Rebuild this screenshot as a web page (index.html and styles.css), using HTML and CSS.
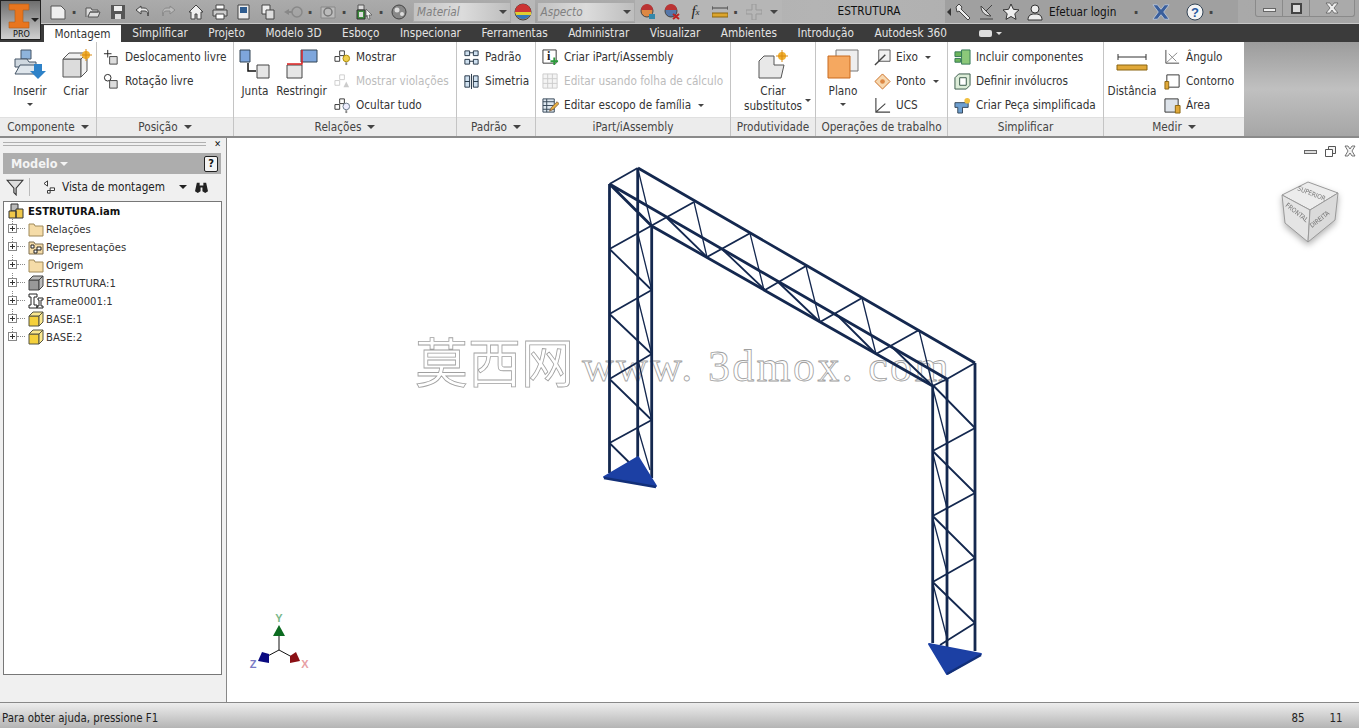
FILE: index.html
```html
<!DOCTYPE html>
<html>
<head>
    <meta charset="UTF-8">
    <title>ESTRUTURA</title>
    <link rel="stylesheet" href="styles.css">
</head>
<body>
    <div class="app-btn">
        <svg width="22" height="26" viewBox="0 0 22 26"><path d="M1 1h20v6h-6v12h6v6H1v-6h6V7H1z" fill="#e8751e" stroke="#b05a14" stroke-width=".6"/></svg>
        <span class="app-pro">PRO</span>
        <span class="app-caret"></span>
    </div>

    <div class="titlebar">
        <div class="quick">
            <span class="qa qa-w"><svg viewBox="0 0 16 16"><path d="M1 2h10l4 4v9H1z" fill="#eee" stroke="#555"/></svg></span><span class="qa-drop">▪</span>
            <span class="qa qa-w"><svg viewBox="0 0 16 16"><path d="M1 13V4h5l1 2h6v2H5l-2 5h10l2-5H5" fill="#ddd" stroke="#555"/></svg></span>
            <span class="qa qa-w"><svg viewBox="0 0 16 16"><path d="M1 1h14v14H1z" fill="#555"/><path d="M4 2h8v5H4z" fill="#eee"/><path d="M5 10h6v5H5z" fill="#ddd"/></svg></span>
            <span class="qa qa-w"><svg viewBox="0 0 16 16"><path d="M6 2L1 6l5 4V7h4c2 0 3 2 3 5 1-4 0-8-4-8H6z" fill="#e8e8e8" stroke="#444"/></svg></span>
            <span class="qa qa-w"><svg viewBox="0 0 16 16"><path d="M10 2l5 4-5 4V7H6c-2 0-3 2-3 5-1-4 0-8 4-8h3z" fill="#bbb" stroke="#888"/></svg></span>
            <span class="qa qa-sep"><svg viewBox="0 0 16 16"><path d="M8 1L1 8h2v7h4v-5h2v5h4V8h2z" fill="#eee" stroke="#444"/></svg></span>
            <span class="qa"><svg viewBox="0 0 16 16"><path d="M4 1h8v4H4z" fill="#fff" stroke="#444"/><path d="M1 6h14v6H1z" fill="#ccc" stroke="#444"/><path d="M4 10h8v5H4z" fill="#fff" stroke="#444"/></svg></span>
            <span class="qa"><svg viewBox="0 0 16 16"><path d="M2 1h11v14H2z" fill="#eee" stroke="#444"/><path d="M4 3h7v6H4z" fill="#2f5c8f"/></svg></span>
            <span class="qa"><svg viewBox="0 0 16 16"><path d="M2 1h8v9H2z" fill="#eee" stroke="#444"/><path d="M6 6h8v9H6z" fill="#ddd" stroke="#444"/></svg></span>
            <span class="qa qa-wide"><svg viewBox="0 0 20 16"><path d="M1 8l5-3v2h3v2H6v2z" fill="#888"/><circle cx="14" cy="8" r="5" fill="none" stroke="#888" stroke-width="1.500"/></svg></span><span class="qa-drop">▪</span>
            <span class="qa"><svg viewBox="0 0 16 16"><path d="M1 3h14v11H1z" fill="#bbb" stroke="#888"/><circle cx="8" cy="8" r="4" fill="none" stroke="#777" stroke-width="1.500"/></svg></span><span class="qa-drop">▪</span>
            <span class="qa qa-green"><svg viewBox="0 0 18 16"><path d="M3 1h6v5H3z" fill="#ddd" stroke="#555"/><path d="M2 6h8v9H2z" fill="#3c8c3c" stroke="#333"/><path d="M4 8h4v5H4z" fill="#ddd"/><path d="M11 5l6 6-3 0 1 4-2 0-1-4-1 2z" fill="#eee" stroke="#444" stroke-width=".6"/></svg></span><span class="qa-drop">▪</span>
            <span class="qa"><svg viewBox="0 0 16 16"><circle cx="8" cy="8" r="7" fill="#888" stroke="#444"/><circle cx="6" cy="6" r="2.500" fill="#ddd"/><circle cx="11" cy="10" r="2" fill="#ddd"/></svg></span>
            <div class="combo combo-mat"><span>Material</span><i class="combo-arrow"></i></div>
            <span class="wheel"><svg viewBox="0 0 18 18"><circle cx="9" cy="9" r="8" fill="#d84" stroke="#444"/><path d="M1 9a8 8 0 0 1 16 0z" fill="#c33"/><path d="M2 12a8 8 0 0 0 14 0z" fill="#37b"/><path d="M1 9h16v3H2z" fill="#dc3"/></svg></span>
            <div class="combo combo-asp"><span>Aspecto</span><i class="combo-arrow"></i></div>
            <span class="qa-bright">
                <span class="qa"><svg viewBox="0 0 16 16"><circle cx="7" cy="7" r="6" fill="#d84" stroke="#444"/><path d="M1 6a6 6 0 0 1 12 0z" fill="#b33"/><path d="M9 10h6v5H9z" fill="#38a"/></svg></span>
                <span class="qa"><svg viewBox="0 0 16 16"><circle cx="7" cy="7" r="6" fill="#57a" stroke="#444"/><path d="M1 6a6 6 0 0 1 12 0z" fill="#b33"/><path d="M9 10l6 5M15 10l-6 5" stroke="#b22" stroke-width="2"/></svg></span>
                <span class="qa qa-fx">f<sub>x</sub></span>
                <span class="qa"><svg viewBox="0 0 16 16"><path d="M0 4h16M0 2v4M16 2v4" stroke="#444" fill="none"/><path d="M0 9h16v4H0z" fill="#dca52c" stroke="#8a6510"/></svg></span><span class="qa-drop">▪</span>
                <span class="qa"><svg viewBox="0 0 16 16"><path d="M6 0h4v6h6v4h-6v6H6v-6H0V6h6z" fill="none" stroke="#999"/></svg></span>
                <span class="qa-more"><i></i></span>
            </span>
        </div>
        <div class="doc-title">ESTRUTURA</div>
        <div class="info">
            <span class="info-left"></span>
            <span class="qa"><svg viewBox="0 0 18 18"><path d="M2 4l3-3 3 3-1 2 9 9-2 2-9-9-2 1z" fill="#eee" stroke="#444"/></svg></span>
            <span class="qa"><svg viewBox="0 0 18 18"><path d="M3 3c0 6 4 10 10 10z" fill="#ddd" stroke="#444"/><path d="M8 8l6-6M2 16h13" stroke="#444"/></svg></span>
            <span class="qa"><svg viewBox="0 0 18 18"><path d="M9 1l2.400 5.300 5.600.6-4.200 3.800 1.200 5.700L9 13.500 4 16.400l1.200-5.700L1 6.900l5.600-.6z" fill="#eee" stroke="#333"/></svg></span>
            <span class="qa"><svg viewBox="0 0 18 18"><circle cx="9" cy="6" r="4" fill="#eee" stroke="#333"/><path d="M2 17c0-5 3-6 7-6s7 1 7 6z" fill="#eee" stroke="#333"/></svg></span>
            <span class="login">Efetuar login</span>
            <span class="qa-drop">▪</span>
            <span class="qa qa-x"><svg viewBox="0 0 20 18"><path d="M1 1h5l4 5 4-5h5l-6 8 6 8h-5l-4-5-4 5H1l6-8z" fill="#3a5f9c" stroke="#c8d4e4" stroke-width=".8"/></svg></span>
            <span class="qa qa-help"><svg viewBox="0 0 18 18"><circle cx="9" cy="9" r="8" fill="#f4f4f4" stroke="#345"/><text x="9" y="13.500" text-anchor="middle" class="help-q">?</text></svg></span>
            <span class="qa-drop">▪</span>
        </div>
        <div class="win">
            <span class="win-btn"><i class="win-min"></i></span>
            <span class="win-btn"><i class="win-max"></i></span>
            <span class="win-btn win-close"><svg viewBox="0 0 14 12"><path d="M1 1h4l2 3 2-3h4L9 6l4 5H9L7 8l-2 3H1l4-5z" fill="#eee" stroke="#555" stroke-width=".7"/></svg></span>
        </div>
    </div>

    <div class="tabs">
        <a class="tab tab-on">Montagem</a>
        <a class="tab">Simplificar</a>
        <a class="tab">Projeto</a>
        <a class="tab">Modelo 3D</a>
        <a class="tab">Esboço</a>
        <a class="tab">Inspecionar</a>
        <a class="tab">Ferramentas</a>
        <a class="tab">Administrar</a>
        <a class="tab">Visualizar</a>
        <a class="tab">Ambientes</a>
        <a class="tab">Introdução</a>
        <a class="tab">Autodesk 360</a>
        <span class="tab-extra"><i></i><b></b></span>
    </div>

    <div class="ribbon">
        <div class="panel p-comp">
            <div class="panel-body">
                <div class="big big-a"><svg viewBox="0 0 32 30"><path d="M7 1h10v9H7z" fill="#8eb4dc" stroke="#456"/><path d="M1 10h12l2 3h7v5H1z" fill="#cfd8e0" stroke="#456"/><path d="M1 25l5-9h20l-5 9z" fill="#dfe6ec" stroke="#456"/><path d="M20 15h8v7h4l-8 8-8-8h4z" fill="#2e82c8"/></svg><span>Inserir</span><i class="caret"></i></div>
                <div class="big big-b"><svg viewBox="0 0 32 30"><path d="M3 10h18v18H3z" fill="#dcdcdc" stroke="#555"/><path d="M3 10l6-6h18l-6 6zM21 10l6-6v18l-6 6z" fill="#f0f0f0" stroke="#555"/><circle cx="26" cy="6" r="4" fill="#f0b030"/><path d="M26 0v12M20 6h12" stroke="#d98a10"/></svg><span>Criar</span></div>
            </div>
            <div class="panel-title">Componente<i class="caret caret-t"></i></div>
        </div>
        <div class="panel p-pos">
            <div class="panel-body col">
                <div class="row"><svg viewBox="0 0 18 18"><path d="M1 5h8M5 1v8" stroke="#222"/><path d="M7 8h8v8H7z" fill="#ddd" stroke="#444"/></svg><span>Deslocamento livre</span></div>
                <div class="row"><svg viewBox="0 0 18 18"><circle cx="5" cy="5" r="3.500" fill="none" stroke="#222"/><path d="M7 8h8v8H7z" fill="#ddd" stroke="#444"/></svg><span>Rotação livre</span></div>
            </div>
            <div class="panel-title">Posição<i class="caret caret-t"></i></div>
        </div>
        <div class="panel p-rel">
            <div class="panel-body">
                <div class="big big-c"><svg viewBox="0 0 32 30"><path d="M1 1h10v12H1z" fill="#7ea6dc" stroke="#345"/><path d="M18 16h12v13H18z" fill="#e6e6e6" stroke="#444"/><path d="M9 14v8h8" fill="none" stroke="#111" stroke-width="1.500"/></svg><span>Junta</span></div>
                <div class="big big-d"><svg viewBox="0 0 32 30"><path d="M15 1h16v12H15z" fill="#7ea6dc" stroke="#345"/><path d="M1 16h15v13H1z" fill="#e6e6e6" stroke="#444"/><path d="M1 15h15V1" fill="none" stroke="#d22" stroke-width="1.500"/></svg><span>Restringir</span></div>
                <div class="col">
                    <div class="row"><svg viewBox="0 0 18 18"><path d="M1 8h5v5H1zM6 2h5v5H6z" fill="#fff" stroke="#333"/><circle cx="13" cy="10" r="3.500" fill="#f0d050" stroke="#a80"/><path d="M12 14h2v3h-2z" fill="#888"/></svg><span>Mostrar</span></div>
                    <div class="row row-off"><svg viewBox="0 0 18 18"><path d="M1 8h5v5H1zM6 2h5v5H6z" fill="#fff" stroke="#ccc"/><path d="M10 15l3-6 3 6z" fill="#ccc"/></svg><span>Mostrar violações</span></div>
                    <div class="row"><svg viewBox="0 0 18 18"><path d="M1 8h5v5H1zM6 2h5v5H6z" fill="#fff" stroke="#333"/><circle cx="13" cy="10" r="3.500" fill="#eef" stroke="#678"/><path d="M12 14h2v3h-2z" fill="#888"/></svg><span>Ocultar tudo</span></div>
                </div>
            </div>
            <div class="panel-title">Relações<i class="caret caret-t"></i></div>
        </div>
        <div class="panel p-pad">
            <div class="panel-body col">
                <div class="row"><svg viewBox="0 0 18 18"><path d="M2 2h5v5H2zM11 2h5v5h-5zM2 11h5v5H2zM11 11h5v5h-5z" fill="#cfe0ef" stroke="#234"/><path d="M7 4h4M7 13h4" stroke="#234"/></svg><span>Padrão</span></div>
                <div class="row"><svg viewBox="0 0 18 18"><path d="M2 3h5v12H2zM11 3h5v12h-5z" fill="#cfe0ef" stroke="#234"/><path d="M2 9h5M11 9h5" stroke="#234"/><path d="M9 1v16" stroke="#234"/></svg><span>Simetria</span></div>
            </div>
            <div class="panel-title">Padrão<i class="caret caret-t"></i></div>
        </div>
        <div class="panel p-ipart">
            <div class="panel-body col">
                <div class="row"><svg viewBox="0 0 18 18"><path d="M1 1h14v14H1z" fill="#fff" stroke="#333"/><text x="7" y="12" text-anchor="middle" class="icon-i">i</text><path d="M13 9v8M9 13h8" stroke="#2a9a3a" stroke-width="2"/></svg><span>Criar iPart/iAssembly</span></div>
                <div class="row row-off"><svg viewBox="0 0 18 18"><path d="M1 1h15v15H1zM1 6h15M1 11h15M6 1v15M11 1v15" fill="#f4f4f4" stroke="#ccc"/></svg><span>Editar usando folha de cálculo</span></div>
                <div class="row"><svg viewBox="0 0 18 18"><path d="M1 2h12v14H1z" fill="#dfe8f0" stroke="#345"/><path d="M1 5h12M1 9h12M1 13h12M5 2v14" stroke="#345"/><path d="M8 15l2-4 6-6 2 2-6 6z" fill="#e8b040" stroke="#864"/></svg><span>Editar escopo de família</span><i class="caret caret-r"></i></div>
            </div>
            <div class="panel-title">iPart/iAssembly</div>
        </div>
        <div class="panel p-prod">
            <div class="panel-body">
                <div class="big big-e"><svg viewBox="0 0 32 30"><path d="M2 12l5-5h10v9h10l-3 13H2z" fill="#e8e8e8" stroke="#555"/><circle cx="25" cy="7" r="4" fill="#f0b030"/><path d="M25 1v12M19 7h12" stroke="#d98a10"/></svg><span>Criar<br>substitutos</span><i class="caret caret-s"></i></div>
            </div>
            <div class="panel-title">Produtividade</div>
        </div>
        <div class="panel p-op">
            <div class="panel-body">
                <div class="big big-f"><svg viewBox="0 0 32 30"><path d="M9 1h22v21H9z" fill="#eee" stroke="#777"/><path d="M1 7h22v22H1z" fill="#f5a860" stroke="#c96a1e"/></svg><span>Plano</span><i class="caret"></i></div>
                <div class="col">
                    <div class="row"><svg viewBox="0 0 18 18"><path d="M5 1h12v12H5z" fill="#f0f0f0" stroke="#555"/><path d="M1 17l11-11" stroke="#444" stroke-width="1.500"/></svg><span>Eixo</span><i class="caret caret-r"></i></div>
                    <div class="row"><svg viewBox="0 0 18 18"><path d="M9 1l8 8-8 8-8-8z" fill="#f7d8b0" stroke="#c96a1e"/><circle cx="9" cy="9" r="2.500" fill="#d84"/></svg><span>Ponto</span><i class="caret caret-r"></i></div>
                    <div class="row"><svg viewBox="0 0 18 18"><path d="M2 1v15h15M2 16l10-9" fill="none" stroke="#444" stroke-width="1.200"/></svg><span>UCS</span></div>
                </div>
            </div>
            <div class="panel-title">Operações de trabalho</div>
        </div>
        <div class="panel p-simp">
            <div class="panel-body col">
                <div class="row"><svg viewBox="0 0 18 18"><path d="M1 3h7v5H1z" fill="#6cb45a" stroke="#375"/><path d="M8 1h9v15H8z" fill="#8cc87a" stroke="#375"/><path d="M1 10h6v4H1z" fill="#6cb45a" stroke="#375"/></svg><span>Incluir componentes</span></div>
                <div class="row"><svg viewBox="0 0 18 18"><path d="M1 5l4-4h12v12l-4 4H1z" fill="#dcecd8" stroke="#354"/><path d="M6 5h7v8H6z" fill="#fff" stroke="#354"/></svg><span>Definir invólucros</span></div>
                <div class="row"><svg viewBox="0 0 18 18"><path d="M1 6h14v5H9v6H4v-6H1z" fill="#6d9fd0" stroke="#345"/><circle cx="14" cy="4" r="3" fill="#f0c040"/></svg><span>Criar Peça simplificada</span></div>
            </div>
            <div class="panel-title">Simplificar</div>
        </div>
        <div class="panel p-med">
            <div class="panel-body">
                <div class="big big-g"><svg viewBox="0 0 32 30"><path d="M2 8h28M2 5v6M30 5v6" stroke="#333" fill="none"/><path d="M1 16h30v5H1z" fill="#e0a838" stroke="#8a6510"/></svg><span>Distância</span></div>
                <div class="col">
                    <div class="row"><svg viewBox="0 0 18 18"><path d="M2 1v14h14" fill="none" stroke="#444"/><path d="M2 15L14 4M5 5l8 8" stroke="#888"/></svg><span>Ângulo</span></div>
                    <div class="row"><svg viewBox="0 0 18 18"><path d="M3 2h13v13H3z" fill="#fff" stroke="#333"/><path d="M1 9h4v8H1z" fill="#e0a838" stroke="#8a6510"/></svg><span>Contorno</span></div>
                    <div class="row"><svg viewBox="0 0 18 18"><path d="M1 2h14v14H1z" fill="#dde3ea" stroke="#333"/><path d="M12 9h5v8h-5z" fill="#e0a838" stroke="#8a6510"/></svg><span>Área</span></div>
                </div>
            </div>
            <div class="panel-title">Medir<i class="caret caret-t"></i></div>
        </div>
    </div>

    <div class="main">
        <div class="side">
            <div class="grip"><span class="grip-lines"></span><span class="grip-x">✕</span></div>
            <div class="side-head"><span class="side-name">Modelo</span><i class="side-caret"></i><span class="side-help">?</span></div>
            <div class="side-tools">
                <svg class="filter" viewBox="0 0 16 16"><path d="M1 2h14L9 9v6l-2-2V9z" fill="#ddd" stroke="#333"/></svg>
                <span class="side-div"></span>
                <svg class="asm" viewBox="0 0 18 16"><path d="M1 4l4-3v6zM8 9h5v3H8zM5 12h3v3H5z" fill="#fff" stroke="#222"/></svg>
                <span class="side-view">Vista de montagem</span>
                <i class="caret caret-k"></i>
                <svg class="bino" viewBox="0 0 16 14"><path d="M1 12l2-9h3v3h4V3h3l2 9-3 2-3-2V8H7v4l-3 2z" fill="#222"/></svg>
            </div>
            <div class="tree">
                <div class="node node-root"><svg viewBox="0 0 16 16"><path d="M3 1h7v7H3z" fill="#bbb" stroke="#333"/><path d="M1 8h7v7H1zM8 6h7v9H8z" fill="#f0c84a" stroke="#333"/></svg><b>ESTRUTURA.iam</b></div>
                <div class="node"><i class="plus"></i><svg viewBox="0 0 16 16"><path d="M1 3h5l1 2h8v10H1z" fill="#f5dca8" stroke="#a08a5a"/></svg><span>Relações</span></div>
                <div class="node"><i class="plus"></i><svg viewBox="0 0 16 16"><path d="M1 3h5l1 2h8v10H1z" fill="#f5dca8" stroke="#807050"/><path d="M3 6h3v3H3zM9 8h4v3H9zM6 11h3v3H6z" fill="#fff" stroke="#222"/></svg><span>Representações</span></div>
                <div class="node"><i class="plus"></i><svg viewBox="0 0 16 16"><path d="M1 3h5l1 2h8v10H1z" fill="#f5dca8" stroke="#a08a5a"/></svg><span>Origem</span></div>
                <div class="node"><i class="plus"></i><svg viewBox="0 0 16 16"><path d="M1 5h10v10H1z" fill="#999" stroke="#444"/><path d="M1 5l4-4h10l-4 4zM11 5l4-4v10l-4 4z" fill="#bbb" stroke="#444"/></svg><span>ESTRUTURA:1</span></div>
                <div class="node"><i class="plus"></i><svg viewBox="0 0 16 16"><path d="M1 1h8v3H6v8h3v3H1v-3h2V4H1z M10 5h5v2h-2v6h2v2h-6v-2h2V7h-1z" fill="#fff" stroke="#222"/></svg><span>Frame0001:1</span></div>
                <div class="node"><i class="plus"></i><svg viewBox="0 0 16 16"><path d="M1 5h10v10H1z" fill="#f4d03c" stroke="#554"/><path d="M1 5l4-4h10l-4 4zM11 5l4-4v10l-4 4z" fill="#fae890" stroke="#554"/></svg><span>BASE:1</span></div>
                <div class="node"><i class="plus"></i><svg viewBox="0 0 16 16"><path d="M1 5h10v10H1z" fill="#f4d03c" stroke="#554"/><path d="M1 5l4-4h10l-4 4zM11 5l4-4v10l-4 4z" fill="#fae890" stroke="#554"/></svg><span>BASE:2</span></div>
            </div>
        </div>
        <div class="canvas">
            <svg class="model" viewBox="227 138 1132 564">
                <g class="watermark">
                    <text x="415" y="383" class="wm-cjk">莫西网</text>
                    <text x="582" y="381" class="wm-lat">www. 3dmox. com</text>
                </g>
                <path class="bar" d="M609.500 184V473M637.700 168V458M651.700 226V478M932.700 386V643M947 379V647M975 363V651M638 168L975 363M609.500 184L947 379M651.700 226L932.700 386M609.500 184L651.700 226"/>
                <path class="brace" d="M609.500 184L637.700 168M609.500 249L694 202M609.500 249L651.700 290M609.500 314L651.700 290M609.500 314L651.700 354M609.500 379L651.700 354M609.500 379L651.700 420M609.500 443L651.700 420M609.500 443L650 483M947 379L975 363M932.700 386L947 379M932.700 385L975 428M932.700 451L975 428M932.700 451L975 493M932.700 516L975 493M932.700 516L975 558M932.700 582L975 558M932.700 582L975 623M940 645L975 623M707 257L750 233.300M765 290L806 266M820 322L862 298M876 354L919 330M667 218L707 257M723 250L765 290M778 282L820 322M835 313L876 354M892 347L932.700 386"/>
                <path class="brace-thin" d="M637.700 168L651.700 226M637.700 233L651.700 290M637.700 298L651.700 354M637.700 358L651.700 420M637.700 428L650 470M694 202L707 257M750 233.300L764 290M806 266L820 322M862 298L876 354M919 330L932.700 386M932.700 388L947 443M932.700 453L947 508M932.700 518L947 572M932.700 583L947 638"/>
                <path class="base" d="M604 477L638 457L656 486Z"/>
                <path class="base" d="M929 644L981 654L947 674Z"/>
                <path class="base-edge" d="M604 478L656 487M947 674L981 655"/>
            </svg>
            <div class="view-btns">
                <i class="vb-min"></i>
                <svg class="vb-max" viewBox="0 0 11 11"><path d="M3.500.5h7v7h-7z" fill="#f4f4f4" stroke="#555"/><path d="M.5 3.500h7v7h-7z" fill="#fff" stroke="#555"/></svg>
                <svg class="vb-x" viewBox="0 0 12 12"><path d="M1 1h3l2 3 2-3h3L8 6l3 5H8L6 8l-2 3H1l3-5z" fill="#f4f4f4" stroke="#555" stroke-width=".8"/></svg>
            </div>
            <svg class="cube" viewBox="0 0 62 68">
                <path d="M2 15L28 2L58 13L30 30Z" fill="#ececec" stroke="#999"/>
                <path d="M2 15L30 30L28 62L5 43Z" fill="#e4e4e4" stroke="#999"/>
                <path d="M30 30L58 13L55 40L28 62Z" fill="#dadada" stroke="#999"/>
                <text class="cube-t" transform="translate(17 10) rotate(22)">SUPERIOR</text>
                <text class="cube-t" transform="translate(5 26) rotate(38)">FRONTAL</text>
                <text class="cube-t" transform="translate(32 48) rotate(-38)">DIREITA</text>
            </svg>
            <svg class="triad" viewBox="0 -6 62 76">
                <path d="M30 24V38L15 46M30 38L43 45" fill="none" stroke="#111"/>
                <path d="M30 13l6 11h-12z" fill="#0c6b20"/>
                <path d="M13 40l7 2v9l-11-2z" fill="#0a0a80"/>
                <path d="M41 44l6-4 4 9-10 2z" fill="#8a1015"/>
                <text x="30" y="10" class="ax ax-y">Y</text>
                <text x="4" y="56" class="ax ax-z">Z</text>
                <text x="56" y="56" class="ax ax-x">X</text>
            </svg>
        </div>
    </div>

    <div class="status">
        <span class="status-msg">Para obter ajuda, pressione F1</span>
        <span class="status-num">85</span>
        <span class="status-num">11</span>
    </div>
</body>
</html>
```
FILE: styles.css
```css
html, body {
    margin: 0;
    padding: 0;
    height: 100%;
    overflow: hidden;
}
body {
    width: 1359px;
    height: 728px;
    display: flex;
    flex-direction: column;
    font-family: "DejaVu Sans Condensed", "DejaVu Sans", sans-serif;
    font-size: 11.700px;
    color: #333;
    background: #f0f0f0;
}
i { font-style: normal; }

/* app button */
.app-btn {
    position: absolute;
    left: 0;
    top: 0;
    width: 41px;
    height: 40px;
    background: linear-gradient(to bottom, #6e6e6e, #a8a8a8 60%, #d0d0d0);
    border: 1px solid #222;
    box-sizing: border-box;
    z-index: 2;
}
.app-btn svg {
    position: absolute;
    left: 7px;
    top: 2px;
}
.app-pro {
    position: absolute;
    left: 12px;
    top: 28px;
    font-size: 9px;
    line-height: 11px;
    color: #111;
}
.app-caret {
    position: absolute;
    right: 1px;
    top: 17px;
    border: 4px solid transparent;
    border-top-color: #222;
}

/* title bar */
.titlebar {
    height: 24px;
    display: flex;
    box-sizing: border-box;
    background: linear-gradient(to right, #a0a0a0, #b4b4b4 60%, #a6a6a6);
    border-bottom: 1px solid #c8c8c8;
}
.quick {
    width: 782px;
    flex: none;
    padding-left: 45px;
    box-sizing: border-box;
    display: flex;
    align-items: center;
    background: linear-gradient(to bottom, #ababab, #a0a0a0);
}
.qa {
    width: 24px;
    flex: none;
    display: flex;
    justify-content: center;
    align-items: center;
}
.qa svg {
    width: 16px;
    height: 16px;
}
.qa-w { width: 25px; }
.qa-sep { margin-left: 4px; }
.qa-wide { width: 26px; }
.qa-wide svg { width: 20px; }
.qa-green { width: 27px; }
.qa-green svg { width: 18px; }
.qa-drop {
    width: 8px;
    flex: none;
    margin-right: 2px;
    font-size: 6px;
    text-align: center;
    color: #444;
}
.combo {
    width: 98px;
    height: 20px;
    flex: none;
    box-sizing: border-box;
    border: 1px solid #aaa;
    background: linear-gradient(to right, #c2c2c2, #dcdcdc 50%, #bdbdbd);
    display: flex;
    align-items: center;
    padding: 0 3px;
    font-style: italic;
    color: #808080;
    justify-content: space-between;
}
.combo-mat { margin-left: 2px; }
.combo-asp { margin-left: 1.500px; }
.combo-arrow {
    border: 4px solid transparent;
    border-top-color: #444;
    margin-top: 4px;
}
.wheel {
    width: 24px;
    height: 23px;
    flex: none;
    display: flex;
    align-items: center;
    justify-content: center;
    background: #b8b8b8;
    box-sizing: border-box;
}
.wheel svg { width: 18px; height: 18px; }
.qa-bright {
    display: flex;
    align-items: center;
    height: 23px;
    background: #b6b6b6;
    padding-left: 1px;
    flex: 1;
}
.qa-fx {
    font-family: "Liberation Serif", serif;
    font-style: italic;
    font-size: 15px;
    color: #222;
}
.qa-fx sub { font-size: 9px; }
.qa-more { padding-left: 4px; }
.qa-more i {
    display: block;
    width: 0;
    border: 4px solid transparent;
    border-top-color: #444;
    margin-top: 4px;
}
.doc-title {
    width: 163px;
    flex: none;
    padding-left: 11px;
    box-sizing: border-box;
    text-align: center;
    line-height: 23px;
    color: #111;
}
.info {
    width: 293px;
    flex: none;
    display: flex;
    align-items: center;
    background: #a0a0a0;
    height: 23px;
}
.info-left {
    width: 0;
    margin-left: -2px;
    border: 4px solid transparent;
    border-right-color: #333;
}
.info .qa svg { width: 18px; height: 18px; }
.login {
    color: #111;
    width: 83px;
    margin-left: 2px;
    flex: none;
}
.qa-x { margin-left: 7px; }
.qa-x svg { width: 20px; }
.qa-help { margin-left: 10px; }
.help-q {
    font-family: "Liberation Sans", sans-serif;
    font-size: 13px;
    font-weight: bold;
    fill: #2a5aa0;
}
.win {
    margin-left: 17px;
    width: 100px;
    height: 17px;
    flex: none;
    display: flex;
    border: 1px solid #8a8a8a;
    border-top: none;
    border-radius: 0 0 3px 3px;
    background: #aaa;
    box-sizing: border-box;
}
.win-btn {
    width: 27px;
    flex: none;
    display: flex;
    align-items: center;
    justify-content: center;
    border-right: 1px solid #8a8a8a;
    box-sizing: border-box;
}
.win-btn:last-child { border: none; flex: 1; }
.win-close svg { width: 14px; height: 12px; }
.win-min {
    width: 11px;
    height: 2px;
    background: #eee;
    border: 1px solid #666;
    margin-top: 3px;
}
.win-max {
    width: 7px;
    height: 7px;
    border: 2px solid #444;
    background: #ddd;
}

/* tabs */
.tabs {
    height: 18px;
    display: flex;
    align-items: stretch;
    background: #3b3b3b;
    padding-left: 44px;
}
.tab {
    padding: 0 10.250px;
    line-height: 18px;
    color: #e4e4e4;
    white-space: nowrap;
}
.tab-on {
    background: #fff;
    color: #333;
    padding: 0;
    margin-right: 1px;
    width: 77px;
    box-sizing: border-box;
    text-align: center;
    border-top: 1px solid #eee;
    margin-top: 1px;
    line-height: 16px;
}
.tab-extra {
    margin-left: 22px;
    display: flex;
    align-items: center;
    gap: 4px;
}
.tab-extra i {
    width: 13px;
    height: 7px;
    background: #ddd;
    border-radius: 2px;
}
.tab-extra b {
    border: 3px solid transparent;
    border-top-color: #ddd;
    margin-top: 3px;
}

/* ribbon */
.ribbon {
    height: 94px;
    flex: none;
    display: flex;
    background: linear-gradient(to bottom, #9c9c9c, #c0c0c0 50%, #a6a6a6);
    border-bottom: 2px solid #8a8a8a;
}
.panel {
    display: flex;
    flex-direction: column;
    background: #fff;
    border-right: 1px solid #c4c4c4;
    box-sizing: border-box;
    flex: none;
}
.p-comp { width: 97px; }
.p-pos { width: 137px; }
.p-rel { width: 223px; }
.p-pad { width: 79px; }
.p-ipart { width: 195px; }
.p-prod { width: 85px; }
.p-op { width: 132px; }
.p-simp { width: 156px; }
.p-med { width: 140px; border-right: none; }
.panel-body {
    flex: 1;
    display: flex;
    padding-top: 3px;
}
.col {
    display: flex;
    flex-direction: column;
}
.panel-title {
    height: 19px;
    line-height: 19px;
    background: #ececec;
    border-top: 1px solid #e0e0e0;
    box-sizing: border-box;
    text-align: center;
    color: #444;
    white-space: nowrap;
}
.row {
    height: 24px;
    display: flex;
    align-items: center;
    white-space: nowrap;
    padding-left: 6px;
    gap: 5px;
}
.row svg {
    width: 17px;
    height: 17px;
    flex: none;
}
.row-off { color: #bcbcbc; }
.icon-i {
    font-family: "Liberation Serif", serif;
    font-size: 13px;
    font-weight: bold;
    fill: #222;
}
.big {
    display: flex;
    flex-direction: column;
    align-items: center;
    text-align: center;
    line-height: 15px;
    position: relative;
    flex: none;
}
.big svg {
    width: 32px;
    height: 30px;
    margin: 4px 0 5px;
}
.big-a { width: 56px; margin-left: 2px; }
.big-b { width: 36px; }
.big-c { width: 40px; margin-left: 1px; }
.big-d { width: 53px; }
.big-e { width: 84px; }
.big-f { width: 50px; margin-left: 2px; }
.big-g { width: 52px; margin-left: 2px; }
.caret {
    display: block;
    width: 0;
    border: 3px solid transparent;
    border-top-color: #444;
    margin-top: 4px;
}
.caret-t {
    display: inline-block;
    border-width: 4px;
    margin: 0 0 -2px 6px;
}
.caret-r {
    margin: 4px 0 0 2px;
}
.caret-s {
    position: absolute;
    right: 4px;
    top: 54px;
    margin: 0;
}
.caret-k {
    border-width: 4px;
    margin-left: 14px;
    border-top-color: #222;
}

/* main area */
.main {
    flex: 1;
    display: flex;
    min-height: 0;
}
.side {
    width: 226px;
    flex: none;
    display: flex;
    flex-direction: column;
    background: #f0f0f0;
    border-right: 1px solid #888;
}
.grip {
    height: 15px;
    display: flex;
    align-items: center;
    box-sizing: border-box;
    padding: 0 5px 4px 3px;
}
.grip-lines {
    flex: 1;
    height: 2px;
    border-top: 1px solid #b0b0b0;
    border-bottom: 1px solid #b0b0b0;
    margin-right: 8px;
}
.grip-x {
    font-size: 9px;
    font-weight: bold;
    color: #111;
}
.side-head {
    height: 21px;
    margin: 0 5px 0 3px;
    background: #adadad;
    display: flex;
    align-items: center;
    padding-left: 8px;
    color: #f4f4f4;
    font-size: 12.600px;
    font-weight: bold;
}
.side-caret {
    border: 4px solid transparent;
    border-top-color: #f4f4f4;
    margin: 4px 0 0 2px;
}
.side-help {
    margin-left: auto;
    margin-right: 3px;
    width: 12px;
    height: 14px;
    line-height: 14px;
    border: 1px solid #222;
    border-radius: 2px;
    background: #f4f4f4;
    color: #111;
    text-align: center;
    font-size: 11px;
}
.side-tools {
    height: 27px;
    flex: none;
    display: flex;
    align-items: center;
    padding: 0 0 2px 6px;
    box-sizing: border-box;
}
.filter { width: 18px; height: 18px; flex: none; }
.side-div {
    width: 1px;
    height: 18px;
    background: #bbb;
    margin: 0 13px 0 5px;
}
.asm { width: 16px; height: 14px; flex: none; margin-right: 3px; }
.side-view { color: #222; white-space: nowrap; width: 103px; flex: none; }
.bino { width: 15px; height: 13px; margin-left: 7px; flex: none; }
.tree {
    height: 474px;
    margin: 0 4px 0 3px;
    background: #fff;
    border: 1px solid #777;
    box-sizing: border-box;
}
.node {
    height: 18px;
    display: flex;
    align-items: center;
    color: #333;
    white-space: nowrap;
    font-size: 11.200px;
    padding-left: 24px;
    position: relative;
}
.node svg { width: 16px; height: 16px; flex: none; margin-right: 2px; }
.node-root {
    padding-left: 4px;
    color: #111;
}
.node-root svg { margin-right: 4px; }
.plus {
    position: absolute;
    left: 4px;
    top: 4px;
    width: 7px;
    height: 7px;
    border: 1px solid #888;
    background:
        linear-gradient(#333, #333) center / 5px 1px no-repeat,
        linear-gradient(#333, #333) center / 1px 5px no-repeat,
        #fff;
}
.plus::after {
    content: "";
    position: absolute;
    left: 8px;
    top: 3px;
    width: 8px;
    border-top: 1px dotted #888;
}
.plus::before {
    content: "";
    position: absolute;
    left: 3px;
    top: -6px;
    height: 5px;
    border-left: 1px dotted #888;
}

/* 3d view */
.canvas {
    flex: 1;
    position: relative;
    background: #fff;
}
.model {
    display: block;
    width: 100%;
    height: 100%;
}
.bar {
    fill: none;
    stroke: #14284f;
    stroke-width: 2.800;
}
.brace {
    fill: none;
    stroke: #14284f;
    stroke-width: 1.800;
}
.brace-thin {
    fill: none;
    stroke: #14284f;
    stroke-width: 1.300;
}
.base { fill: #1c40a4; stroke: #1c40a4; stroke-width: 2; stroke-linejoin: round; }
.base-edge { fill: none; stroke: #122f78; stroke-width: 2.500; }
.watermark {
    fill: rgba(255,255,255,0.2);
    stroke: #a0a0a0;
    stroke-width: 0.800;
}
.wm-cjk {
    font-family: "Noto Sans CJK SC", sans-serif;
    font-size: 53px;
}
.wm-lat {
    font-family: "Liberation Serif", serif;
    font-size: 44px;
    letter-spacing: 2.300px;
}
.view-btns {
    position: absolute;
    top: 7px;
    right: 3px;
    display: flex;
    align-items: center;
    gap: 8px;
}
.vb-min { width: 11px; height: 2px; border: 1px solid #666; background: #ddd; margin-top: 2px; }
.vb-max { width: 11px; height: 11px; }
.vb-x { width: 12px; height: 12px; }
.cube {
    position: absolute;
    left: 1053px;
    top: 42px;
    width: 62px;
    height: 68px;
    filter: drop-shadow(0 3px 3px rgba(0,0,0,0.3));
}
.cube-t {
    font-size: 6.500px;
    fill: #777;
}
.triad {
    position: absolute;
    left: 22px;
    top: 468px;
    width: 62px;
    height: 76px;
}
.ax {
    font-family: "Liberation Sans", sans-serif;
    font-size: 11px;
    font-weight: bold;
    text-anchor: middle;
}
.ax-y { fill: #7ab88a; }
.ax-z { fill: #7a7ac4; }
.ax-x { fill: #e8a0a4; }

/* status bar */
.status {
    height: 26px;
    flex: none;
    display: flex;
    align-items: flex-end;
    padding-bottom: 2px;
    box-sizing: border-box;
    background: linear-gradient(to bottom, #ededed, #d4d4d4 45%, #b4b4b4);
    border-top: 1px solid #888;
    padding-left: 2px;
    color: #222;
    font-size: 11.400px;
    line-height: 15px;
}
.status-msg { flex: 1; }
.status-num {
    width: 38px;
    text-align: center;
}
.status-num:last-child { margin-right: 4px; }
```
